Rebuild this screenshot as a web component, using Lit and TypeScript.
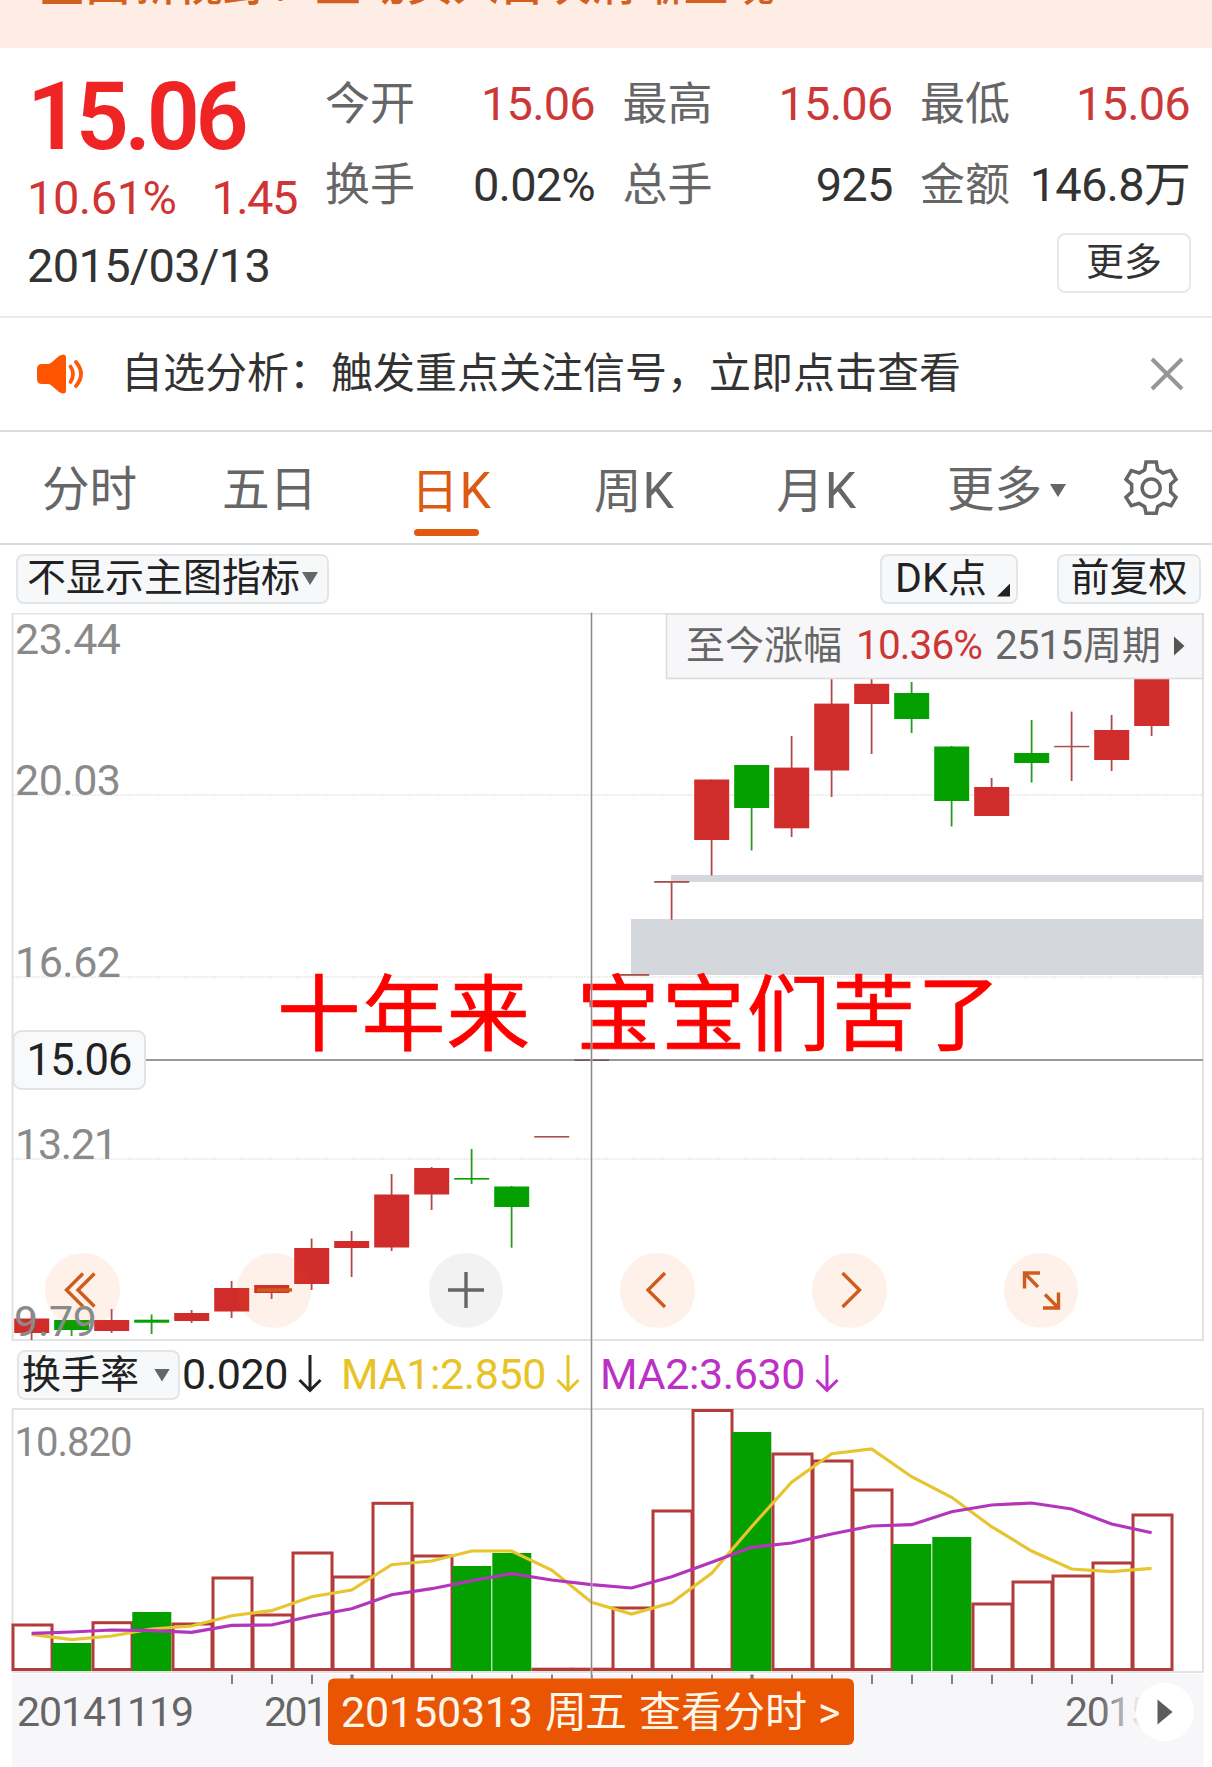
import { LitElement, html, svg, css } from "lit";
import { customElement } from "lit/decorators.js";
import { classMap } from "lit/directives/class-map.js";

type Candle = [dir: "r" | "g", high: number, top: number, bottom: number, low: number];

const RED = "#d02c2b";
const GREEN = "#03a000";
const STEP = 40;
const cx = (i: number) => 31.6 + STEP * i;

const candles: Candle[] = [
  ["r", 1313, 1318.5, 1333, 1340], ["g", 1320, 1320, 1330, 1336], ["r", 1309, 1320, 1331, 1333],
  ["g", 1314.5, 1319.7, 1322.7, 1334], ["r", 1310, 1313, 1321, 1323], ["r", 1281, 1288, 1311.5, 1318],
  ["r", 1285, 1285, 1293, 1299], ["r", 1238.5, 1248, 1284, 1290], ["r", 1231, 1241, 1248, 1277],
  ["r", 1174, 1194.5, 1247.5, 1251], ["r", 1167, 1168, 1194.5, 1210], ["g", 1149, 1178, 1179.6, 1184],
  ["g", 1186, 1186.5, 1207, 1247.7], ["r", 1136, 1136, 1137.6, 1137], ["r", 1060, 1059.4, 1061, 1060],
  ["r", 975, 974, 975.8, 975], ["r", 882, 881, 882.8, 919.7], ["r", 779.5, 779.5, 840, 875.5],
  ["g", 765, 765, 808, 850.5], ["r", 736, 767.6, 828.3, 837], ["r", 640, 703.6, 770.5, 797],
  ["r", 670, 683.8, 704, 754], ["g", 682, 693, 719, 733], ["g", 746, 746.5, 801, 826.5],
  ["r", 778, 787, 816, 816], ["g", 720, 753, 763, 782.5], ["r", 711.6, 745.8, 747.3, 781],
  ["r", 715, 730, 760, 771], ["r", 650, 660, 726, 736],
];

const volumes: ["r" | "g", number][] = [
  ["r", 1625], ["g", 1643], ["r", 1622.7], ["g", 1612], ["r", 1624], ["r", 1578], ["r", 1615],
  ["r", 1553], ["r", 1577], ["r", 1503.3], ["r", 1556], ["g", 1566], ["g", 1553], ["r", 1669.2],
  ["r", 1669.2], ["r", 1608], ["r", 1511], ["r", 1410.5], ["g", 1432], ["r", 1454], ["r", 1461],
  ["r", 1490], ["g", 1544], ["g", 1537], ["r", 1604], ["r", 1582], ["r", 1576], ["r", 1563], ["r", 1515],
];

const ma1 = [1634.3, 1639.7, 1636, 1629, 1626, 1615.7, 1610.7, 1596.7, 1590, 1564.7, 1561, 1551, 1551, 1570,
  1602.3, 1614, 1602.7, 1573.3, 1526.7, 1482.3, 1453.7, 1449, 1476.7, 1497.3, 1526.7, 1551, 1569, 1571.7, 1568.3];
const ma2 = [1633.3, 1632, 1630, 1630.7, 1632.3, 1625.3, 1625, 1616, 1608.7, 1594.7, 1588.7, 1580.7, 1573.7,
  1580, 1584.7, 1588, 1576.7, 1562.3, 1547.3, 1543, 1534, 1526, 1524.7, 1511.7, 1505, 1503, 1509, 1524, 1532.7];
const line = (v: number[]) => v.map((y, i) => `${cx(i)},${y}`).join(" ");

const fontStack = css`Roboto, "Noto Sans CJK SC", sans-serif`;

@customElement("down-caret")
class DownCaret extends LitElement {
  static styles = css`
    :host { display: block; width: 16px; height: 13px; background: #666; clip-path: polygon(0 0, 100% 0, 50% 100%); }
  `;
  render() { return html``; }
}

@customElement("quote-summary")
class QuoteSummary extends LitElement {
  static styles = css`
    :host { display: flex; height: 268px; border-bottom: 2px solid #e9ebec; padding-right: 21px; font-family: ${fontStack}; line-height: 1; color: #333; }
    .left { width: 299px; padding: 22px 0 0 27px; white-space: nowrap; }
    .price { font-size: 94px; font-weight: 600; letter-spacing: -4.4px; color: #ef2525; height: 94px; transform-origin: 0 50%; transform: scaleX(.99); }
    .change { display: flex; gap: 35px; font-size: 47px; letter-spacing: -.5px; color: #d03433; margin-top: 10px; }
    .change span + span { letter-spacing: -1.6px; }
    .date { font-size: 47px; margin-top: 21px; letter-spacing: -.7px; }
    .right { flex: 1; display: flex; flex-direction: column; align-items: flex-end; padding-top: 30px; }
    .grid { display: grid; grid-template-columns: repeat(3, 269px); column-gap: 28.5px; row-gap: 31px; align-self: stretch; }
    .cell { display: flex; justify-content: space-between; align-items: center; height: 50px; white-space: nowrap; }
    .label { font-size: 45px; color: #666; margin: 2px 0 0 -1px; }
    .value { font-size: 47px; letter-spacing: -.8px; }
    .up { color: #cc3837; }
    .more { box-sizing: border-box; width: 134px; height: 60px; border: 2px solid #e6e8ea; border-radius: 8px; margin-top: 24px; font-size: 38px; display: flex; align-items: center; justify-content: center; padding-bottom: 2px; }
  `;
  render() {
    const cells: [string, string, boolean][] = [
      ["今开", "15.06", true], ["最高", "15.06", true], ["最低", "15.06", true],
      ["换手", "0.02%", false], ["总手", "925", false], ["金额", "146.8万", false],
    ];
    return html`
      <div class="left">
        <div class="price">15.06</div>
        <div class="change"><span>10.61%</span><span>1.45</span></div>
        <div class="date">2015/03/13</div>
      </div>
      <div class="right">
        <div class="grid">
          ${cells.map(([l, v, up]) => html`<div class="cell"><span class="label">${l}</span><span class=${classMap({ value: true, up })}>${v}</span></div>`)}
        </div>
        <div class="more">更多</div>
      </div>`;
  }
}

@customElement("notice-bar")
class NoticeBar extends LitElement {
  static styles = css`
    :host { display: flex; align-items: center; height: 112px; border-bottom: 2px solid #d9dcde; padding: 0 27px 0 36px; font-family: ${fontStack}; line-height: 1; }
    .text { flex: 1; font-size: 42px; color: #333; padding-left: 35px; white-space: nowrap; }
    svg { display: block; }
  `;
  render() {
    return html`
      <svg width="50" height="42" viewBox="0 0 50 42">
        <path fill="#ff5500" d="M6 11H12Q14 11 16 9L23 3Q30 -1 30 5V37Q30 43 23 39L16 33Q14 31 12 31H6Q1 31 1 26V16Q1 11 6 11Z"/>
        <g fill="none" stroke="#ff5a0c" stroke-width="3.8" stroke-linecap="round">
          <path d="M34.5 13.5Q39.5 21 34.5 29"/><path d="M40 9Q50 21 40 33"/>
        </g>
      </svg>
      <div class="text">自选分析：触发重点关注信号，立即点击查看</div>
      <svg width="36" height="36" viewBox="0 0 36 36"><path d="M3 3L33 33M33 3L3 33" stroke="#969696" stroke-width="4"/></svg>`;
  }
}

@customElement("period-tabs")
class PeriodTabs extends LitElement {
  static styles = css`
    :host { display: flex; align-items: center; height: 111px; border-bottom: 2px solid #d9dcde; padding: 0 33px 0 42px; font-family: ${fontStack}; line-height: 1; color: #666; font-size: 47.5px; }
    .tab { box-sizing: border-box; height: 111px; padding-top: 6px; display: flex; flex-direction: column; align-items: center; justify-content: center; white-space: nowrap; }
    .tab:nth-child(1) { margin-right: 85px; }
    .tab:nth-child(2) { margin-right: 94px; }
    .tab:nth-child(3) { margin-right: 103px; }
    .tab:nth-child(4) { margin-right: 102.5px; }
    .tab:nth-child(5) { margin-right: auto; }
    .k { margin-left: 1px; font-size: 50px; }
    .label { display: flex; align-items: baseline; height: 48px; line-height: 48px; }
    .active { color: #dc5a14; }
    .active::after { content: ""; width: 65px; height: 7px; border-radius: 4px; background: #e0590f; margin: 14px 8px -21px 0; }
    .tab.more { flex-direction: row; gap: 8px; margin-right: 57px; }
    svg { display: block; }
  `;
  private kTab(unit: string, active = false) {
    return html`<div class=${classMap({ tab: true, active })}><div class="label">${unit}<span class="k">K</span></div></div>`;
  }
  render() {
    return html`
      <div class="tab">分时</div><div class="tab">五日</div>
      ${this.kTab("日", true)}${this.kTab("周")}${this.kTab("月")}
      <div class="tab more">更多<down-caret></down-caret></div>
      <svg width="56" height="58" viewBox="36 27 168 174" fill="none" stroke="#666" stroke-width="10.5">
        <path d="M105 36H136L140 60L156 69L179 62L195 88L179 103V126L195 142L180 167L157 160L140 170L136 190H105L101 170L84 160L61 167L45 142L62 126V103L45 88L61 62L85 69L101 60Z"/>
        <circle cx="120.5" cy="114" r="27"/>
      </svg>`;
  }
}

@customElement("chart-toolbar")
class ChartToolbar extends LitElement {
  static styles = css`
    :host { display: flex; align-items: center; height: 50px; padding: 8.5px 11px 9.5px 16px; font-family: ${fontStack}; line-height: 1; color: #222; font-size: 39px; }
    .btn { box-sizing: border-box; height: 50px; background: #f6f8fa; border: 2px solid #e2e6e9; border-radius: 8px; display: flex; align-items: center; white-space: nowrap; }
    .main { width: 313px; padding-left: 9px; gap: 2px; margin-right: auto; }
    .dk { width: 138px; padding: 0 6px 0 13px; justify-content: space-between; margin-right: 39px; }
    .latin { font-size: 41px; }
    .adj { width: 144px; justify-content: center; }
    .corner { width: 13px; height: 13px; background: #222; clip-path: polygon(100% 0, 100% 100%, 0 100%); align-self: flex-end; margin-bottom: 5px; }
  `;
  render() {
    return html`
      <div class="btn main">不显示主图指标<down-caret></down-caret></div>
      <div class="btn dk"><span><span class="latin">DK</span>点</span><i class="corner"></i></div>
      <div class="btn adj">前复权</div>`;
  }
}

@customElement("chart-controls")
class ChartControls extends LitElement {
  static styles = css`
    :host { display: flex; gap: 117.3px; }
    .ctl { width: 74.5px; height: 74.5px; border-radius: 50%; background: rgba(245, 95, 15, .09); display: flex; align-items: center; justify-content: center; }
    .neutral { background: rgba(0, 0, 0, .05); }
    svg { display: block; overflow: visible; fill: none; stroke: #cf5c1c; stroke-width: 3.4; }
    .neutral svg { stroke: #666; }
  `;
  render() {
    const icons = ["M1 -16.5L-15.5 0L1 16.5M12.5 -16.5L-4 0L12.5 16.5", "M-17 0H18", "M-18 0H18M0 -18V18",
      "M7 -17L-10 0L7 17", "M-6.5 -17L10.5 0L-6.5 17",
      "M-1 -17H-16.5V-1.5M-16.5 -17L-3 -3M2 18H17.5V2.5M17.5 18L4 4.5"];
    return html`${icons.map((d, i) => html`<div class=${classMap({ ctl: true, neutral: i === 2 })}>
      <svg width="40" height="40" viewBox="-20 -20 40 40"><path d=${d}/></svg></div>`)}`;
  }
}

@customElement("k-chart")
class KChart extends LitElement {
  static styles = css`
    :host { display: block; position: relative; height: 729px; }
    svg { display: block; }
    .overlay { position: absolute; left: 45px; top: 640px; }
    text { font-family: ${fontStack}; }
    .axis { fill: #8a8a8a; font-size: 43px; }
    .info { font-size: 40.5px; fill: #666; }
    .cjk { font-size: 39px; }
    .banner { font-size: 83.5px; fill: #f00; stroke: #f00; stroke-width: .7px; }
    .front { position: absolute; left: 0; top: 0; }
  `;
  render() {
    return html`
      <svg width="1212" height="729" viewBox="0 613 1212 729">
        <g stroke="#e2e2e2" stroke-width="1.6" stroke-dasharray="1.6 1.2">
          ${[795, 977, 1159].map((y) => svg`<path d="M13 ${y}H1203"/>`)}
        </g>
        <path d="M12.5 613V1341M1203 613V1341M12 613.5H1204M12 1340H1204" stroke="#e2e2e2" stroke-width="2" fill="none"/>
        <path d="M671 875H1203V882H671ZM631 919H1203V975H631Z" fill="#d4d7dc"/>
        <path d="M145 1060H1203" stroke="#999" stroke-width="1.8"/>
        ${candles.map(([d, h, t, b, l], i) => {
          const thin = b - t < 2;
          const fill = d === "r" ? (thin ? (i === 14 ? "#7d5553" : "#a8504e") : RED) : GREEN;
          return svg`<g fill=${fill}>
            <rect x=${cx(i) - 0.9} y=${h} width="1.8" height=${Math.max(0, l - h)} fill=${d === "r" ? "#b34a48" : "#259a25"}/>
            <rect x=${cx(i) - 17.4} y=${t} width="35" height=${b - t}/></g>`;
        })}
      </svg>
      <chart-controls class="overlay"></chart-controls>
      <svg class="front" width="1212" height="729" viewBox="0 613 1212 729">
        <g class="axis">
          <text x="15" y="654" textLength="106">23.44</text>
          <text x="15" y="795" textLength="106">20.03</text>
          <text x="15" y="977" textLength="106">16.62</text>
          <text x="15" y="1159" textLength="103">13.21</text>
          <text x="14" y="1336" textLength="83">9.79</text>
        </g>
        <rect x="13.5" y="1031" width="131.5" height="58" rx="8" fill="#f7f9fb" stroke="#dfe3e6" stroke-width="2"/>
        <text x="26.5" y="1074.5" font-size="43.5" fill="#222" textLength="106">15.06</text>
        <rect x="666.5" y="614" width="536.5" height="64.5" fill="#f7f7fa" stroke="#dcdcde" stroke-width="1.6"/>
        <g class="info">
          <text class="cjk" x="686" y="659" textLength="156">至今涨幅</text>
          <text x="856" y="659" fill="#cc3635" textLength="127">10.36%</text>
          <text x="995" y="659" textLength="88">2515</text>
          <text class="cjk" x="1083" y="659" textLength="78">周期</text>
        </g>
        <path d="M1174 636.5L1184.5 646L1174 655.5Z" fill="#555"/>
        <text class="banner" x="277" y="1043.5" textLength="253">十年来</text>
        <text class="banner" x="576.5" y="1043.5" textLength="424">宝宝们苦了</text>
      </svg>`;
  }
}

@customElement("indicator-bar")
class IndicatorBar extends LitElement {
  static styles = css`
    :host { display: flex; align-items: center; height: 66px; padding-left: 17px; font-family: ${fontStack}; line-height: 1; font-size: 43px; color: #222; white-space: nowrap; }
    .btn { box-sizing: border-box; width: 163px; height: 50px; background: #f6f8fa; border: 2px solid #e2e6e9; border-radius: 8px; display: flex; align-items: center; font-size: 39px; padding: 0 8px 0 3px; justify-content: space-between; }
    .val { display: flex; align-items: center; gap: 10px; letter-spacing: -.4px; margin-top: -2px; }
    .first { width: 159px; margin-left: 2px; }
    .ma1 { color: #e8c327; width: 259px; }
    .ma2 { color: #bd30c6; }
    svg { display: block; fill: none; stroke: currentColor; stroke-width: 3; }
  `;
  private item(cls: string, text: string) {
    return html`<div class="val ${cls}"><span>${text}</span><svg width="24" height="38" viewBox="0 0 24 38"><path d="M12 0V35M1.5 25L12 35.5L22.5 25"/></svg></div>`;
  }
  render() {
    return html`<div class="btn">换手率<down-caret></down-caret></div>
      ${this.item("first", "0.020")}${this.item("ma1", "MA1:2.850")}${this.item("ma2", "MA2:3.630")}`;
  }
}

@customElement("turnover-chart")
class TurnoverChart extends LitElement {
  static styles = css`
    :host { display: block; height: 359px; }
    svg { display: block; }
    text { font-family: ${fontStack}; font-size: 41px; fill: #666; }
    .scale { fill: #8a8a8a; font-size: 40px; }
    .tip text { fill: #fff6ea; font-size: 43px; }
    .tip .cjk { font-size: 42px; }
  `;
  render() {
    return html`
      <svg width="1212" height="359" viewBox="0 1408 1212 359">
        <defs><linearGradient id="fade"><stop offset="0" stop-color="#f7f7fa" stop-opacity="0"/><stop offset="1" stop-color="#f7f7fa"/></linearGradient></defs>
        <rect x="12" y="1674" width="1191.5" height="93" fill="#f7f7fa"/>
        <path d="M12.5 1409V1672M1203 1409V1672M12 1409H1204M12 1672H1204" stroke="#e2e2e2" stroke-width="2" fill="none"/>
        <text class="scale" x="14.5" y="1456" textLength="118">10.820</text>
        ${volumes.map(([d, y], i) => d === "g"
          ? svg`<rect x=${cx(i) - 19.3} y=${y} width="39" height=${1671 - y} fill=${GREEN}/>`
          : svg`<rect x=${cx(i) - 18.6} y=${y} width="39" height=${1669.5 - y} fill="none" stroke="#b33b39" stroke-width="3"/>`)}
        <polyline points=${line(ma1)} fill="none" stroke="#e6c52e" stroke-width="3.2"/>
        <polyline points=${line(ma2)} fill="none" stroke="#b434bc" stroke-width="3.2"/>
        ${Array.from({ length: 23 }, (_, k) => k + 5).map((i) => svg`<path d="M${cx(i) + 0.4} 1674.5V1684" stroke="#777" stroke-width=${i % 10 === 8 ? 3.2 : 1.8}/>`)}
        <text x="17" y="1726" textLength="177">20141119</text>
        <text x="264" y="1726" textLength="64">201</text>
        <text x="1065" y="1726" textLength="88">2015</text>
        <rect x="1100" y="1690" width="42" height="50" fill="url(#fade)"/>
        <rect x="1142" y="1690" width="30" height="50" fill="#f7f7fa"/>
        <circle cx="1165" cy="1712" r="29" fill="#fff"/>
        <path d="M1157.5 1699.5L1172.5 1712L1157.5 1724.5Z" fill="#5c5c5c"/>
        <g class="tip">
          <rect x="328" y="1678.5" width="526" height="66.5" rx="6" fill="#ea5504"/>
          <text x="341" y="1727" textLength="192">20150313</text>
          <text class="cjk" x="545" y="1727" textLength="82">周五</text>
          <text class="cjk" x="639" y="1727" textLength="168">查看分时</text>
          <text x="818" y="1727">&gt;</text>
        </g>
      </svg>`;
  }
}

@customElement("app-root")
class AppRoot extends LitElement {
  static styles = css`
    :host { display: block; width: 1212px; height: 1767px; background: #fff; overflow: hidden; }
    .promo { height: 48px; background: #fdede4; overflow: hidden; font: 500 46px/46px ${fontStack}; color: #d2611f; white-space: nowrap; padding-left: 39px; box-sizing: border-box; }
    .promo span { display: block; margin-top: -39px; }
    .charts { position: relative; }
    .crosshair { position: absolute; left: 591px; top: 0; width: 1px; height: 1065px; background: #8a8a8a; box-shadow: 0 0 0 .5px #bbb; }
  `;
  render() {
    return html`
      <div class="promo"><span>全面新视野！主动买入首次清晰呈现</span></div>
      <quote-summary></quote-summary>
      <notice-bar></notice-bar>
      <period-tabs></period-tabs>
      <chart-toolbar></chart-toolbar>
      <div class="charts">
        <k-chart></k-chart>
        <indicator-bar></indicator-bar>
        <turnover-chart></turnover-chart>
        <div class="crosshair"></div>
      </div>`;
  }
}
